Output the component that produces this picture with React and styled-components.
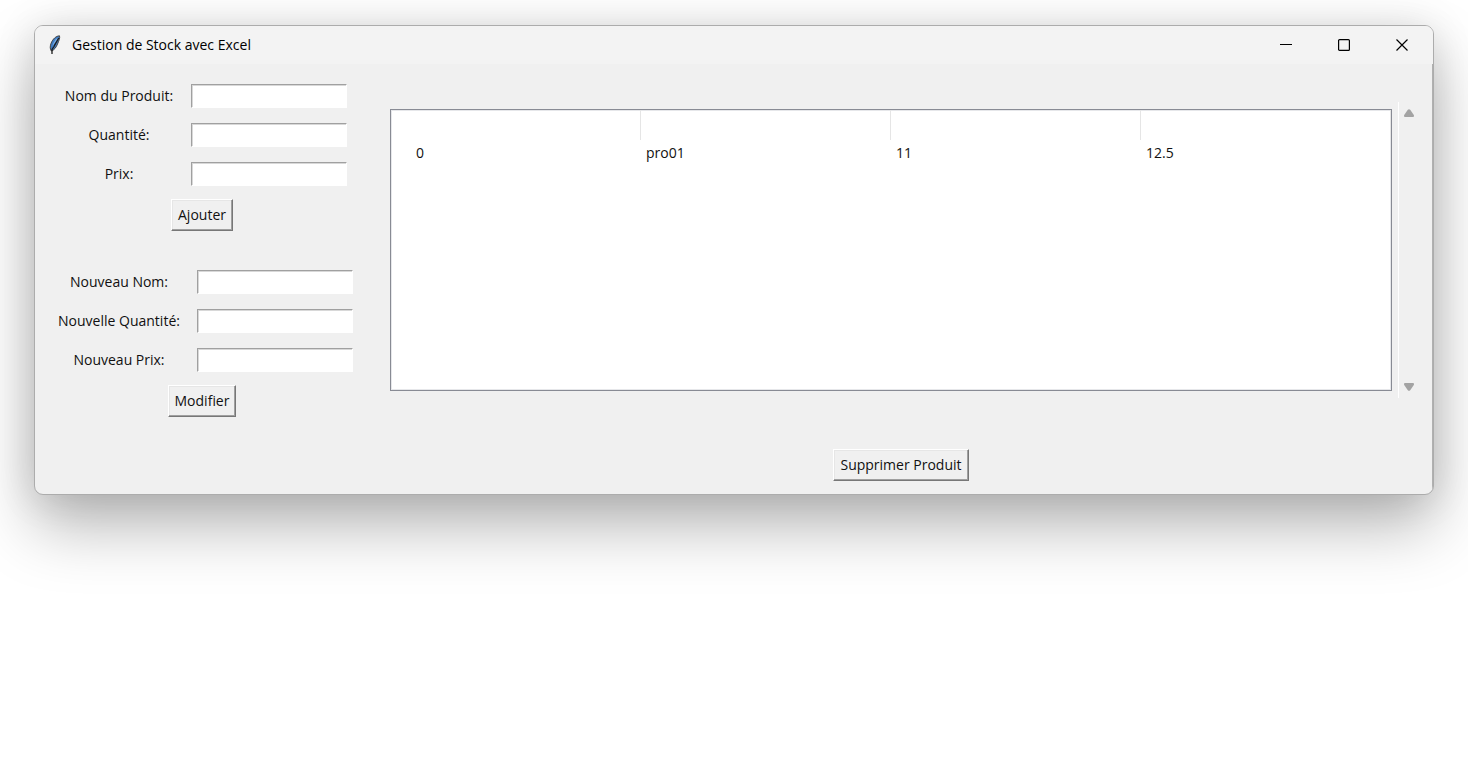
import React from "react";
import styled, { createGlobalStyle } from "styled-components";

const GlobalStyle = createGlobalStyle`
  * { box-sizing: border-box; }
  body {
    margin: 0;
    background: #fff;
    color: #111;
    font: 14px/20px "Open Sans", "Noto Sans", sans-serif;
  }
`;

const Desktop = styled.div`
  min-height: 100vh;
  padding: 25px 34px;
  overflow: hidden;
`;

const Window = styled.main`
  border: 1px solid #acacac;
  border-radius: 9px;
  background: #f0f0f0;
  overflow: hidden;
  box-shadow: 0 32px 64px rgba(0, 0, 0, 0.28), 0 2px 40px rgba(0, 0, 0, 0.12);
`;

const TitleBar = styled.header`
  display: flex;
  align-items: center;
  height: 38px;
  padding: 0 2px 0 12px;
  background: #f3f3f3;
`;

const Title = styled.h1`
  flex: 1;
  margin: 0 0 0 9px;
  font-size: 14px;
  line-height: 20px;
  font-weight: 400;
  color: #000;
`;

const CaptionButton = styled.button`
  display: grid;
  place-items: center;
  width: 58px;
  height: 38px;
  padding: 0;
  border: 0;
  background: transparent;
`;

const Content = styled.div`
  display: flex;
  padding: 20px 13px 13px 16px;
  border-right: 1px solid #b0b0b0;
`;

const Sidebar = styled.div`
  display: flex;
  flex-direction: column;
  align-items: center;
  gap: 39px;
  flex: 0 0 302px;
`;

const Form = styled.form`
  display: flex;
  flex-direction: column;
  align-items: center;
  gap: 13px;
`;

const Fields = styled.div`
  display: grid;
  grid-template-columns: ${(p) => p.$labelWidth}px 156px;
  gap: 15px 10px;
`;

const Label = styled.label`
  line-height: 24px;
  text-align: center;
  white-space: nowrap;
`;

const Input = styled.input`
  width: 100%;
  height: 24px;
  padding: 0 4px;
  border: 1px solid;
  border-color: #a0a0a0 #fff #fff #a0a0a0;
  border-radius: 0;
  outline: 0;
  background: #fff;
  box-shadow: inset 1px 1px #d8d8d8;
  font: inherit;
`;

const Button = styled.button`
  height: 32px;
  padding: 0 6px;
  border: 1px solid;
  border-color: #fff #777 #777 #fff;
  border-radius: 0;
  background: #f0f0f0;
  box-shadow: inset -1px -1px #a0a0a0, inset 1px 1px #e6e6e6;
  color: #111;
  font: inherit;
  white-space: nowrap;
`;

const Stock = styled.section`
  display: flex;
  flex: 1;
  flex-direction: column;
  align-items: center;
  gap: 51px;
  min-width: 0;
  margin-left: 30px;
  padding-top: 18px;
`;

const ListFrame = styled.div`
  display: flex;
  align-self: stretch;
  height: 296px;
`;

const TableView = styled.div`
  flex: 1;
  margin: 7px 6px 7px 7px;
  border: 1px solid #888b94;
  background: #fff;
  box-shadow: inset 0 0 0 1px #e6e7ea;
`;

const Table = styled.table`
  width: 100%;
  table-layout: fixed;
  border-collapse: separate;
  border-spacing: 0;
`;

const HeadCell = styled.th`
  height: 30px;
  padding: 0;
  border-right: 1px solid #e5e5e5;
`;

const Cell = styled.td`
  height: 25px;
  padding: 0 5px;
  &:first-child { padding-left: 25px; }
`;

const Scrollbar = styled.div`
  display: flex;
  flex-direction: column;
  justify-content: space-between;
  width: 21px;
  border-left: 1px solid #fff;
`;

const ArrowButton = styled.button`
  display: grid;
  place-items: center;
  height: 22px;
  padding: 0;
  border: 0;
  background: transparent;
`;

function Feather() {
  return (
    <svg width="16" height="20" viewBox="0 0 16 20" aria-hidden="true">
      <path d="M12.500 .8C9 1 5.800 4 4.200 8C3 11 2.800 13.500 4.300 16C7.500 15 9.300 12 10.500 9C11.800 6 13.200 3 12.500 .8Z" fill="#3f7cc4" stroke="#444" />
      <path d="M10.800 2.500C8 4.500 6 8 5.500 11L9.500 6Z" fill="#79ade3" />
      <path d="M11.800 3C9.500 7 8.500 8 7 11.500L5 14.500V19" fill="none" stroke="#1c1c1c" strokeWidth="1.300" />
    </svg>
  );
}

function FieldForm({ prefix, fields, labelWidth, action }) {
  return (
    <Form onSubmit={(e) => e.preventDefault()}>
      <Fields $labelWidth={labelWidth}>
        {fields.map((label, i) => (
          <React.Fragment key={label}>
            <Label htmlFor={`${prefix}-${i}`}>{label}</Label>
            <Input id={`${prefix}-${i}`} type="text" />
          </React.Fragment>
        ))}
      </Fields>
      <Button type="submit">{action}</Button>
    </Form>
  );
}

const columns = ["id", "nom", "quantite", "prix"];
const products = [["0", "pro01", "11", "12.5"]];

export default function App() {
  return (
    <Desktop>
      <GlobalStyle />
      <Window>
        <TitleBar>
          <Feather />
          <Title>Gestion de Stock avec Excel</Title>
          <CaptionButton type="button" aria-label="Réduire">
            <svg width="12" height="12"><path d="M0 5.500H12" stroke="#000" /></svg>
          </CaptionButton>
          <CaptionButton type="button" aria-label="Agrandir">
            <svg width="12" height="12"><rect x=".6" y=".6" width="10.800" height="10.800" rx="1" fill="none" stroke="#000" strokeWidth="1.200" /></svg>
          </CaptionButton>
          <CaptionButton type="button" aria-label="Fermer">
            <svg width="12" height="12"><path d="M.5 .5L11.500 11.500M11.500 .5L.5 11.500" stroke="#000" strokeWidth="1.200" /></svg>
          </CaptionButton>
        </TitleBar>
        <Content>
          <Sidebar>
            <FieldForm prefix="ajout" labelWidth={124} fields={["Nom du Produit:", "Quantité:", "Prix:"]} action="Ajouter" />
            <FieldForm prefix="modif" labelWidth={136} fields={["Nouveau Nom:", "Nouvelle Quantité:", "Nouveau Prix:"]} action="Modifier" />
          </Sidebar>
          <Stock>
            <ListFrame>
              <TableView>
                <Table>
                  <thead>
                    <tr>{columns.map((c) => <HeadCell key={c} scope="col" />)}</tr>
                  </thead>
                  <tbody>
                    {products.map((row) => (
                      <tr key={row[0]}>{row.map((v, i) => <Cell key={columns[i]}>{v}</Cell>)}</tr>
                    ))}
                  </tbody>
                </Table>
              </TableView>
              <Scrollbar>
                <ArrowButton type="button" aria-label="Défiler vers le haut">
                  <svg width="12" height="8"><path d="M4.800 .8Q6 -.4 7.200 .8L10.800 6Q11.500 8 10 8H2Q.5 8 1.200 6Z" fill="#a3a3a3" /></svg>
                </ArrowButton>
                <ArrowButton type="button" aria-label="Défiler vers le bas">
                  <svg width="12" height="8"><path d="M4.800 7.200Q6 8.400 7.200 7.200L10.800 2Q11.500 0 10 0H2Q.5 0 1.200 2Z" fill="#a3a3a3" /></svg>
                </ArrowButton>
              </Scrollbar>
            </ListFrame>
            <Button type="button">Supprimer Produit</Button>
          </Stock>
        </Content>
      </Window>
    </Desktop>
  );
}
